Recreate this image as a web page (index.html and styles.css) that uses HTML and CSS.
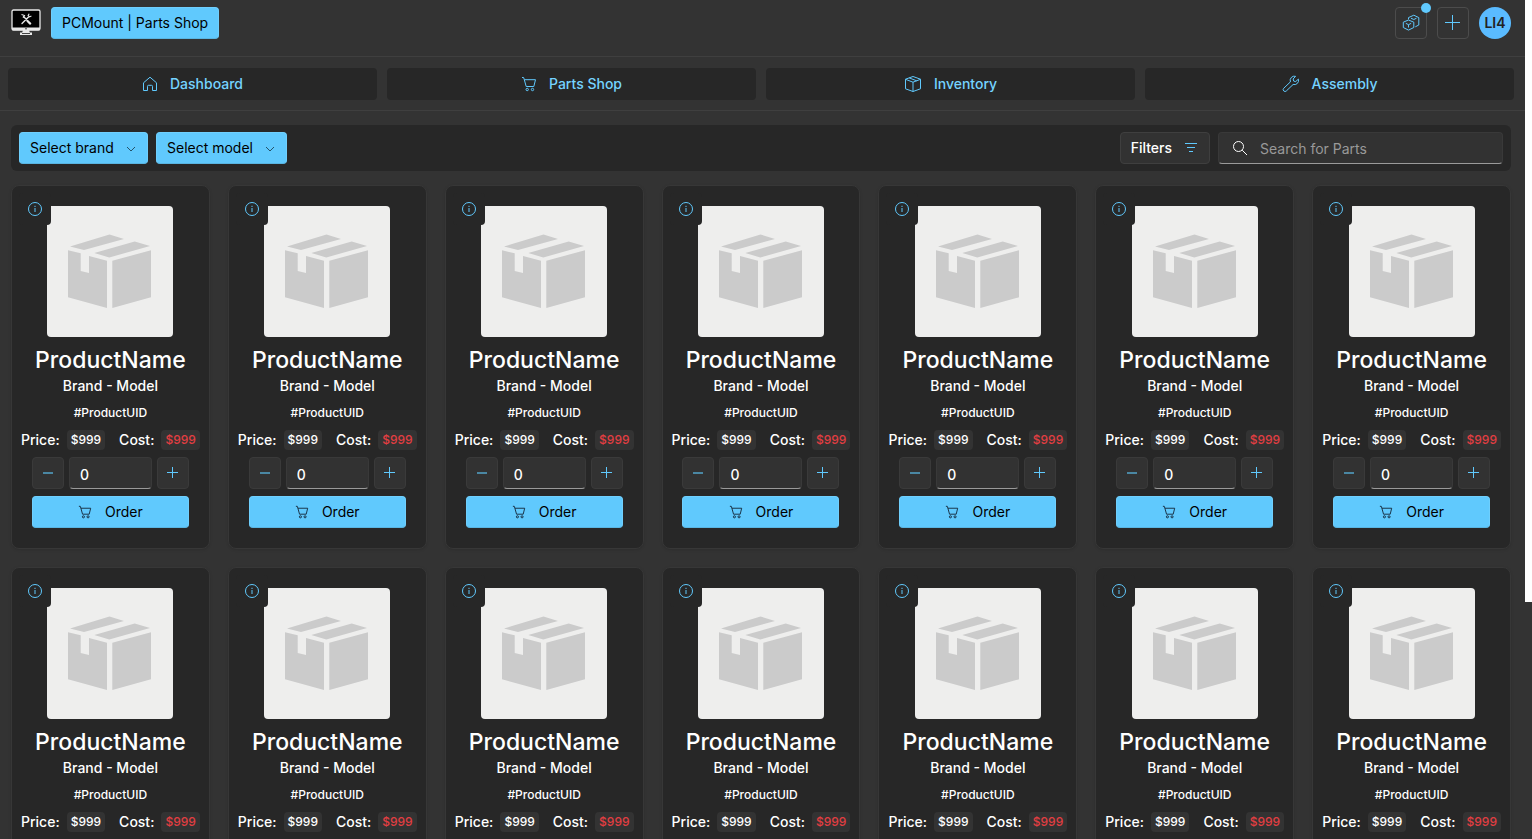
FILE: index.html
```html
<!DOCTYPE html>
<html lang="en">
<head>
<meta charset="utf-8">
<meta name="viewport" content="width=device-width, initial-scale=1">
<title>PCMount | Parts Shop</title>
<link rel="stylesheet" href="styles.css">
</head>
<body>
<svg class="sprite" aria-hidden="true">
  <symbol id="i-home" viewBox="0 0 16 16"><path d="M1.5 6.8 8 1.2l6.500 5.600V14.500h-4V10.300a1 1 0 0 0-1-1h-3a1 1 0 0 0-1 1V14.500h-4z"/></symbol>
  <symbol id="i-cart" viewBox="0 0 16 16"><path d="M1 1.500h1.600l.7 2.200h11.200l-1.700 6.800H5.200L3.300 3.700"/><circle cx="6.200" cy="13.500" r="1.200"/><circle cx="11.500" cy="13.500" r="1.200"/></symbol>
  <symbol id="i-box" viewBox="0 0 18 18"><path d="M9 1.500 16.500 4.200v9.600L9 16.500 1.500 13.800V4.200zM1.500 4.300 9 7.200l7.500-2.900M9 7.200v9.300M5.200 2.900l7.500 2.900"/></symbol>
  <symbol id="i-wrench" viewBox="0 0 18 18"><path d="M13.600 1.300a4.300 4.300 0 0 0-5.200 5.600L1.700 13.300a1.800 1.800 0 0 0 2.700 2.600l6.700-6.400a4.300 4.300 0 0 0 5.300-5.400l-2.700 2.500-2-.5-.6-2.100z"/></symbol>
  <symbol id="i-boxes" viewBox="0 0 18 18"><path d="M6.500 6 11.800 8.200v5.300l-5.300 2.600L1.300 13.500V8.200zM3.800 9.300l2.700 1.400 2.700-1.400M6.500 10.700v2.800M6.500 5.300V3.600L11.800 1.200l5 2.400v7.400l-3.500 1.800M9 4.200l2.800 1.300L14.500 4.200"/></symbol>
  <symbol id="i-plus" viewBox="0 0 16 16"><path d="M7.500 0v15M0 7.500h15"/></symbol>
  <symbol id="i-plus-small" viewBox="0 0 12 12"><path d="M5.500 0v11M0 5.500h11"/></symbol>
  <symbol id="i-minus" viewBox="0 0 12 12"><path d="M1 6h10"/></symbol>
  <symbol id="i-chevron" viewBox="0 0 10 10"><path d="m1 3 4 4 4-4"/></symbol>
  <symbol id="i-filter" viewBox="0 0 14 14"><path d="M1 2.500h12M3 6.500h8M5 10.500h4"/></symbol>
  <symbol id="i-search" viewBox="0 0 16 16"><circle cx="6.500" cy="6.500" r="5"/><path d="m10.200 10.200 4.800 4.800"/></symbol>
  <symbol id="i-info" viewBox="0 0 16 16"><circle cx="8" cy="8" r="6.500"/><path d="M8 7v4M8 4.800v1.200"/></symbol>
  <symbol id="i-package" viewBox="0 0 126 131">
    <path d="m23 40.500 39.500-12L77 33 37 44zM47.300 47l40.400-11.500L103 40l-40.700 11.500zM21 44.300l12.700 3V65l8.300 2V50l18 4.700V102L21 91.300zM65.300 54.700 104 44.300v47L65.300 102z"/>
  </symbol>
</svg>

<div class="app">
  <header class="header">
    <svg class="logo" viewBox="0 0 30 27" role="img" aria-label="PCMount">
      <rect x="1" y="1" width="28" height="20" rx="1.500" fill="#000" stroke="#e8e8e8" stroke-width="1.300"/>
      <path fill="#e8e8e8" d="M1 18.500h28v2.700H1zM12 21h6l.8 2.500H21V26H9v-2.500h2.200z"/>
      <path stroke="#444" d="M11 24.500h8M14 19.800h2"/>
      <path fill="none" stroke="#e8e8e8" stroke-width="1.400" stroke-linecap="round" d="m11 14.500 6.500-6.500M12.500 7.500l4 4"/>
      <path fill="none" stroke="#e8e8e8" stroke-width="1.100" d="M18.200 4.700 17.100 6.500l1.400 1.400 1.900-1M10.500 5.500l3 1-1.500 2.200"/>
      <path fill="none" stroke="#e8e8e8" stroke-width="2.200" stroke-linecap="round" d="m16.500 12 2.700 2.600"/>
    </svg>
    <button class="btn btn-accent" type="button">PCMount | Parts Shop</button>
    <div class="header-actions">
      <button class="icon-btn" type="button" aria-label="Orders"><svg class="icon icon-l"><use href="#i-boxes"/></svg><span class="badge"></span></button>
      <button class="icon-btn" type="button" aria-label="Add"><svg class="icon icon-m"><use href="#i-plus"/></svg></button>
      <button class="avatar" type="button">LI4</button>
    </div>
  </header>

  <nav class="nav">
    <a class="nav-link" href="#dashboard"><svg class="icon icon-m"><use href="#i-home"/></svg>Dashboard</a>
    <a class="nav-link" href="#shop"><svg class="icon icon-m"><use href="#i-cart"/></svg>Parts Shop</a>
    <a class="nav-link" href="#inventory"><svg class="icon icon-l"><use href="#i-box"/></svg>Inventory</a>
    <a class="nav-link" href="#assembly"><svg class="icon icon-l"><use href="#i-wrench"/></svg>Assembly</a>
  </nav>

  <main class="main">
    <div class="toolbar">
      <div class="dropdown">
        <select class="btn btn-accent" aria-label="Brand"><option>Select brand</option></select>
        <svg class="icon chevron"><use href="#i-chevron"/></svg>
      </div>
      <div class="dropdown">
        <select class="btn btn-accent" aria-label="Model"><option>Select model</option></select>
        <svg class="icon chevron"><use href="#i-chevron"/></svg>
      </div>
      <button class="btn filters" type="button">Filters<svg class="icon icon-s"><use href="#i-filter"/></svg></button>
      <label class="search">
        <svg class="icon icon-m"><use href="#i-search"/></svg>
        <input type="search" placeholder="Search for Parts" aria-label="Search for Parts">
      </label>
    </div>
    <div class="grid" id="products"></div>
  </main>
</div>
<div class="scroll-thumb"></div>

<template id="product-card">
  <article class="card">
    <svg class="photo"><use href="#i-package"/></svg>
    <button class="info" type="button" aria-label="Details"><svg class="icon icon-m"><use href="#i-info"/></svg></button>
    <h2 class="name">ProductName</h2>
    <p class="model">Brand - Model</p>
    <p class="uid">#ProductUID</p>
    <div class="prices">
      <span>Price:</span><span class="tag">$999</span>
      <span class="cost-label">Cost:</span><span class="tag tag-cost">$999</span>
    </div>
    <div class="order">
      <div class="quantity">
        <button class="step" type="button" aria-label="Decrease"><svg class="icon icon-xs dim"><use href="#i-minus"/></svg></button>
        <input class="count" type="text" inputmode="numeric" value="0" aria-label="Quantity">
        <button class="step" type="button" aria-label="Increase"><svg class="icon icon-xs"><use href="#i-plus-small"/></svg></button>
      </div>
      <button class="btn btn-accent order-btn" type="button"><svg class="icon icon-s"><use href="#i-cart"/></svg>Order</button>
    </div>
  </article>
</template>
<script src="app.js"></script>
</body>
</html>
```

FILE: styles.css
```css
:root {
  --bg: #333333;
  --panel: #272727;
  --field: #323232;
  --line: #3f3f3f;
  --accent: #60c9fd;
  --accent-text: #75d3ff;
}

* { box-sizing: border-box; }

body {
  margin: 0;
  background: var(--bg);
  color: #fff;
  font: 14px/20px Inter, "Noto Sans", sans-serif;
}

button, input, select { font: inherit; color: inherit; }
button { padding: 0; }
h2, p { margin: 0; }

.sprite { position: absolute; width: 0; height: 0; }

.icon {
  display: block;
  flex: none;
  fill: none;
  stroke: var(--accent);
  stroke-width: 1;
}
.icon-xs { width: 12px; height: 12px; }
.icon-s { width: 14px; height: 14px; }
.icon-m { width: 16px; height: 16px; }
.icon-l { width: 18px; height: 18px; }
.dim { stroke: #4a87a3; stroke-width: 2; }

.app {
  display: flex;
  flex-direction: column;
  height: 100vh;
  padding-right: 7px;
  overflow: hidden;
}

.scroll-thumb {
  position: fixed;
  top: 0;
  right: 0;
  width: 7px;
  height: 602px;
  background: #fff;
}

.btn {
  display: inline-flex;
  align-items: center;
  justify-content: center;
  height: 32px;
  padding: 0 10px;
  border: 1px solid var(--line);
  border-radius: 4px;
}
.btn-accent {
  background: var(--accent);
  border-color: #6fcffd;
  border-bottom-color: #59b5e2;
  color: #000;
}

.header {
  display: flex;
  gap: 10px;
  flex: none;
  padding: 7px 14px 17px 11px;
  border-bottom: 1px solid var(--line);
}
.logo { width: 30px; height: 27px; margin-top: 2px; }
.header-actions { display: flex; gap: 10px; margin-left: auto; }
.icon-btn {
  position: relative;
  display: grid;
  place-items: center;
  width: 32px;
  height: 32px;
  background: transparent;
  border: 1px solid #4c4c4c;
  border-radius: 4px;
}
.badge {
  position: absolute;
  top: -5px;
  right: -5px;
  width: 10px;
  height: 10px;
  border-radius: 50%;
  background: var(--accent);
}
.avatar {
  width: 32px;
  height: 32px;
  border: 0;
  border-radius: 50%;
  background: #5abbff;
  color: #222;
  font-weight: 600;
}

.nav {
  display: grid;
  grid-template-columns: repeat(4, 1fr);
  gap: 10px;
  flex: none;
  padding: 11px 11px 10px 8px;
  border-bottom: 1px solid var(--line);
}
.nav-link {
  display: flex;
  align-items: center;
  justify-content: center;
  gap: 12px;
  height: 32px;
  border-radius: 4px;
  background: var(--panel);
  color: var(--accent-text);
  font-weight: 500;
  text-decoration: none;
}

.main {
  flex: 1;
  min-height: 0;
  padding: 14px 14px 0 11px;
  overflow-y: auto;
  scrollbar-width: none;
}
.toolbar {
  display: flex;
  gap: 8px;
  padding: 7px 8px;
  border-radius: 6px;
  background: var(--panel);
}
.dropdown { position: relative; }
.dropdown select {
  appearance: none;
  padding-right: 33px;
}
.chevron {
  position: absolute;
  top: 12px;
  right: 12px;
  width: 10px;
  height: 10px;
  stroke: #24536a;
  pointer-events: none;
}
.filters {
  gap: 12px;
  padding: 0 11px 0 10px;
  margin-left: auto;
  background: var(--field);
  font-weight: 500;
}
.search {
  display: flex;
  align-items: center;
  gap: 12px;
  width: 285px;
  height: 32px;
  padding: 0 13px;
  border: 1px solid #393939;
  border-bottom-color: #9a9a9a;
  border-radius: 4px;
  background: var(--field);
}
.search .icon { stroke: #fff; }
.search input {
  flex: 1;
  min-width: 0;
  padding: 2px 0 0;
  border: 0;
  outline: 0;
  background: none;
}
.search input::placeholder { color: #999; opacity: 1; }

.grid {
  display: grid;
  grid-template-columns: repeat(auto-fill, minmax(190px, 1fr));
  gap: 18px;
  padding: 14px 0 20px;
}

.card {
  position: relative;
  display: flex;
  flex-direction: column;
  align-items: center;
  padding: 20px 9px;
  border: 1px solid #373737;
  border-radius: 8px;
  background: var(--panel);
  font-weight: 500;
  box-shadow: 0 1px 3px rgba(0, 0, 0, 0.12);
}
.photo {
  width: 126px;
  height: 131px;
  border-radius: 4px;
  background: #eeeeed;
  fill: #cbcbcb;
}
.info {
  position: absolute;
  top: 7px;
  left: 7px;
  display: grid;
  place-items: center;
  width: 32px;
  height: 32px;
  border: 0;
  border-radius: 4px;
  background: var(--panel);
}
.name {
  margin-top: 7px;
  font-size: 23px;
  line-height: 32px;
  font-weight: 500;
}
.uid { margin-top: 7px; font-size: 12px; }
.prices {
  display: flex;
  gap: 7px;
  margin-top: 7px;
}
.cost-label { margin-left: 7px; }
.tag {
  padding: 0 4px;
  border-radius: 4px;
  background: #333;
  font-size: 12px;
}
.tag-cost { color: #e23e42; }

.order {
  display: flex;
  flex-direction: column;
  gap: 7px;
  width: 157px;
  margin-top: 7px;
}
.quantity { display: flex; gap: 5px; }
.step {
  display: grid;
  place-items: center;
  flex: none;
  width: 32px;
  height: 32px;
  border: 1px solid #3a3a3a;
  border-radius: 4px;
  background: var(--field);
}
.count {
  flex: 1;
  min-width: 0;
  height: 32px;
  padding: 2px 10px 0;
  border: 1px solid #393939;
  border-bottom-color: #9a9a9a;
  border-radius: 4px;
  background: var(--field);
}
.order-btn { gap: 13px; font-weight: 400; }
.order-btn .icon { stroke: #123; }
```

FILE: app.js
```js
const grid = document.getElementById("products");
const card = document.getElementById("product-card");

for (let i = 0; i < 14; i++) {
  grid.append(card.content.cloneNode(true));
}
```
